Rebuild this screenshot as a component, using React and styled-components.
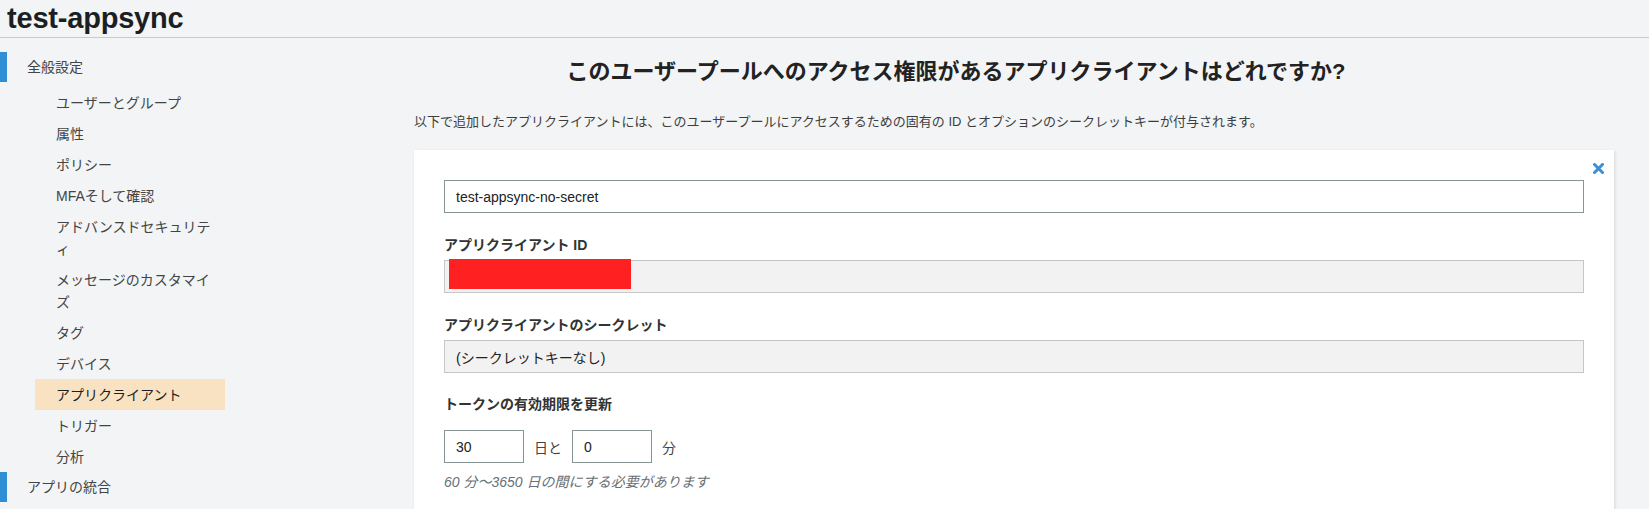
import styled, { createGlobalStyle } from 'styled-components';

const GlobalStyle = createGlobalStyle`
    html, body {
        margin: 0;
        padding: 0;
        overflow: hidden;
        background: #f2f4f5;
        font-family: 'Liberation Sans', 'Noto Sans CJK JP', sans-serif;
        color: #444;
    }
    * {
        box-sizing: border-box;
    }
`;

const menu = [
    { label: 'ユーザーとグループ' },
    { label: '属性' },
    { label: 'ポリシー' },
    { label: 'MFAそして確認' },
    { label: 'アドバンスドセキュリティ' },
    { label: 'メッセージのカスタマイズ' },
    { label: 'タグ' },
    { label: 'デバイス' },
    { label: 'アプリクライアント', active: true },
    { label: 'トリガー' },
    { label: '分析' },
];

function CloseIcon() {
    return (
        <svg width="11" height="11" viewBox="0 0 11 11">
            <path d="M1.5 1.5 L9.5 9.5 M9.5 1.5 L1.5 9.5" stroke="#3a8fd6" strokeWidth="3" strokeLinecap="square" />
        </svg>
    );
}

function App() {
    return (
        <>
            <GlobalStyle />
            <Header>
                <h1>test-appsync</h1>
            </Header>
            <Body>
                <Sidebar>
                    <TopItem>全般設定</TopItem>
                    <SubList>
                        {menu.map((item) => (
                            <SubItem key={item.label} $active={item.active}>
                                {item.label}
                            </SubItem>
                        ))}
                    </SubList>
                    <TopItem>アプリの統合</TopItem>
                </Sidebar>
                <Main>
                    <Title>このユーザープールへのアクセス権限があるアプリクライアントはどれですか?</Title>
                    <Lead>
                        以下で追加したアプリクライアントには、このユーザープールにアクセスするための固有の ID とオプションのシークレットキーが付与されます。
                    </Lead>
                    <Card>
                        <CloseButton aria-label="close">
                            <CloseIcon />
                        </CloseButton>
                        <Field>test-appsync-no-secret</Field>

                        <Group>
                            <Label>アプリクライアント ID</Label>
                            <Field $readonly>
                                <Redacted />
                            </Field>
                        </Group>

                        <Group>
                            <Label>アプリクライアントのシークレット</Label>
                            <Field $readonly>(シークレットキーなし)</Field>
                        </Group>

                        <Group $gap={21}>
                            <Label>トークンの有効期限を更新</Label>
                            <ExpiryRow>
                                <SmallField>30</SmallField>
                                <Unit>日と</Unit>
                                <SmallField>0</SmallField>
                                <Unit>分</Unit>
                            </ExpiryRow>
                            <Hint>60 分〜3650 日の間にする必要があります</Hint>
                        </Group>
                    </Card>
                </Main>
            </Body>
        </>
    );
}

export default App;

const Header = styled.header`
    height: 38px;
    padding-left: 7px;
    border-bottom: 1px solid #c8cbcc;
    display: flex;
    align-items: center;

    h1 {
        margin: 0;
        font-size: 29px;
        font-weight: bold;
        color: #1b1f23;
        letter-spacing: -0.2px;
    }
`;

const Body = styled.div`
    display: flex;
    align-items: flex-start;
`;

const Sidebar = styled.nav`
    width: 240px;
    flex-shrink: 0;
    padding-top: 14px;
    font-size: 14px;
    line-height: 22px;
    line-break: loose;
`;

const TopItem = styled.div`
    height: 30px;
    display: flex;
    align-items: center;
    border-left: 7px solid #2f8ed4;
    padding-left: 20px;
    color: #444;
`;

const SubList = styled.ul`
    list-style: none;
    margin: 5px 0 0 0;
    padding: 0;
`;

const SubItem = styled.li`
    margin-left: 35px;
    width: 190px;
    padding: 4.5px 10px 4.5px 21px;
    background: ${(p) => (p.$active ? '#f8e2c2' : 'transparent')};
    color: ${(p) => (p.$active ? '#1b1f23' : '#444')};
`;

const Main = styled.main`
    flex: 1;
    padding: 19px 35px 0 174px;
`;

const Title = styled.h2`
    margin: 0;
    padding-right: 116px;
    text-align: center;
    font-size: 22px;
    line-height: 30px;
    font-weight: bold;
    color: #222;
`;

const Lead = styled.p`
    margin: 25px 0 0 0;
    font-size: 13px;
    line-height: 20px;
    color: #3d3d3d;
`;

const Card = styled.section`
    position: relative;
    margin-top: 18px;
    background: #fff;
    padding: 30px 30px 60px 30px;
    box-shadow: 1px 1px 3px rgba(0, 0, 0, 0.12);
`;

const CloseButton = styled.button`
    position: absolute;
    top: 13px;
    right: 10px;
    border: none;
    background: none;
    padding: 0;
    display: flex;
    cursor: pointer;
`;

const Field = styled.div`
    position: relative;
    height: 33px;
    display: flex;
    align-items: center;
    padding: 0 11px;
    font-size: 14px;
    color: #222;
    background: ${(p) => (p.$readonly ? '#f2f2f2' : '#fff')};
    border: 1px solid ${(p) => (p.$readonly ? '#c6c6c6' : '#879596')};
`;

const Redacted = styled.span`
    position: absolute;
    left: 4px;
    top: -2px;
    width: 182px;
    height: 30px;
    background: #ff2121;
`;

const Group = styled.div`
    margin-top: ${(p) => p.$gap || 22}px;
`;

const Label = styled.div`
    font-size: 14px;
    line-height: 20px;
    font-weight: bold;
    color: #333;
    margin-bottom: 5px;
`;

const ExpiryRow = styled.div`
    display: flex;
    align-items: center;
    gap: 10px;
    margin-top: 16px;
`;

const SmallField = styled(Field)`
    width: 80px;
`;

const Unit = styled.span`
    font-size: 14px;
    color: #444;
`;

const Hint = styled.div`
    margin-top: 9px;
    font-size: 14px;
    line-height: 20px;
    font-style: italic;
    color: #687078;
`;
